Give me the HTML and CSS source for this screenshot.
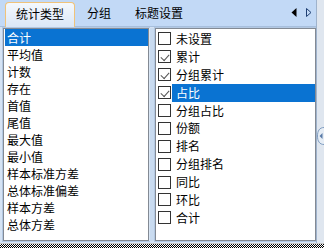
FILE: index.html
```
<!DOCTYPE html>
<html>
<head>
<meta charset="utf-8">
<link rel="stylesheet" href="styles.css">
</head>
<body>
<div class="app">
  <div class="main">
    <div class="tabs">
      <div class="tab active">统计类型</div>
      <div class="tab">分组</div>
      <div class="tab">标题设置</div>
      <div class="nav">
        <svg width="6" height="9" viewBox="0 0 6 9"><path d="M5.5 0 L0.5 4.5 L5.5 9 Z" fill="#000"/></svg>
        <svg width="6" height="9" viewBox="0 0 6 9"><path d="M0.5 0.5 L5 4.5 L0.5 8.5 Z" fill="none" stroke="#1f3f73" stroke-width="1"/></svg>
      </div>
    </div>
    <div class="body">
      <div class="list left">
        <div class="item sel">合计</div>
        <div class="item">平均值</div>
        <div class="item">计数</div>
        <div class="item">存在</div>
        <div class="item">首值</div>
        <div class="item">尾值</div>
        <div class="item">最大值</div>
        <div class="item">最小值</div>
        <div class="item">样本标准方差</div>
        <div class="item">总体标准偏差</div>
        <div class="item">样本方差</div>
        <div class="item">总体方差</div>
      </div>
      <div class="splitter"></div>
      <div class="list right">
        <div class="crow"><span class="box"></span><span class="lbl">未设置</span></div>
        <div class="crow"><span class="box on"></span><span class="lbl">累计</span></div>
        <div class="crow"><span class="box on"></span><span class="lbl">分组累计</span></div>
        <div class="crow"><span class="box on"></span><span class="lbl sel">占比</span></div>
        <div class="crow"><span class="box"></span><span class="lbl">分组占比</span></div>
        <div class="crow"><span class="box"></span><span class="lbl">份额</span></div>
        <div class="crow"><span class="box"></span><span class="lbl">排名</span></div>
        <div class="crow"><span class="box"></span><span class="lbl">分组排名</span></div>
        <div class="crow"><span class="box"></span><span class="lbl">同比</span></div>
        <div class="crow"><span class="box"></span><span class="lbl">环比</span></div>
        <div class="crow"><span class="box"></span><span class="lbl">合计</span></div>
      </div>
    </div>
  </div>
  <div class="side">
    <svg class="handle" width="7" height="20" viewBox="0 0 7 20"><path d="M7 1.5 C2.5 1.5 0.5 5 0.5 10 C0.5 15 2.5 18.5 7 18.5" fill="#e6edf5" stroke="#7f9cc0" stroke-width="1"/><path d="M5.5 7 L2.5 10 L5.5 13 Z" fill="#5a7ca8"/></svg>
  </div>
  <div class="dots"></div>
</div>
</body>
</html>
```
FILE: styles.css
```
* { box-sizing: border-box; }
html, body { margin: 0; padding: 0; }
body {
  width: 324px;
  height: 248px;
  overflow: hidden;
  font-family: "Noto Sans CJK SC", "Microsoft YaHei", sans-serif;
  font-size: 12px;
  color: #000;
  background: #d9e5f3;
}
.app {
  display: grid;
  grid-template-columns: 316px 8px;
  grid-template-rows: 243px 5px;
  width: 324px;
  height: 248px;
}
.main {
  display: flex;
  flex-direction: column;
  background: #d5e3f4;
}
.tabs {
  height: 27px;
  flex: none;
  display: flex;
  align-items: flex-end;
  background: #c2d9f6;
  border-bottom: 1px solid #a7bfdd;
  padding-left: 5px;
}
.tab {
  height: 24px;
  line-height: 22px;
  padding: 0 12px;
  white-space: nowrap;
}
.tab.active {
  padding: 0 10px;
  height: 25px;
  margin-bottom: -1px;
  border: 1px solid #f0c37a;
  border-bottom: none;
  border-radius: 4px 4px 0 0;
  background: linear-gradient(#f4f8fd, #dbe7f6);
}
.nav {
  margin-left: auto;
  height: 24px;
  display: flex;
  align-items: center;
  gap: 9px;
  padding-right: 4px;
  padding-bottom: 4px;
}
.nav svg { display: block; }
.body {
  flex: 1;
  display: flex;
  padding: 1px 0 2px 3px;
}
.list {
  background: #fff;
  border: 1px solid #838a94;
  box-shadow: 0 0 0 1px #b3c8e2;
}
.left {
  width: 146px;
  padding: 0 0 0 1px;
}
.item {
  height: 17px;
  line-height: 17px;
  padding-left: 2px;
  white-space: nowrap;
}
.item.sel {
  background: #0a73d2;
  color: #fff;
}
.splitter {
  width: 6px;
  background: #c9dbf0;
  border-left: 1px solid #d9e6f5;
  border-right: 1px solid #b9cde6;
}
.right {
  width: 161px;
  padding: 1px 0 0 2px;
}
.crow {
  height: 17.9px;
  display: flex;
  align-items: center;
}
.box {
  width: 13px;
  height: 13px;
  border: 1px solid #333;
  background: #fff;
  flex: none;
  position: relative;
  margin-right: 1px;
}
.box.on::after {
  content: "";
  position: absolute;
  left: 2px;
  top: 1px;
  width: 7px;
  height: 4px;
  border-left: 1.5px solid #555;
  border-bottom: 1.5px solid #555;
  transform: translate(0, 2px) rotate(-48deg);
}
.lbl {
  height: 18px;
  line-height: 18px;
  padding-left: 4px;
  flex: 1;
  white-space: nowrap;
}
.lbl.sel {
  background: #0a73d2;
  color: #fff;
}
.side {
  background: #dfe6ef;
  border-left: 1px solid #9fb3cc;
  display: flex;
  align-items: flex-start;
  justify-content: flex-end;
}
.handle {
  display: block;
  margin-top: 126px;
}
.dots {
  grid-column: 1 / span 2;
  background: repeating-conic-gradient(#000 0 25%, #fff 0 50%) 0 0 / 2px 2px;
  border-top: 1px solid #c8c8c8;
}
```
